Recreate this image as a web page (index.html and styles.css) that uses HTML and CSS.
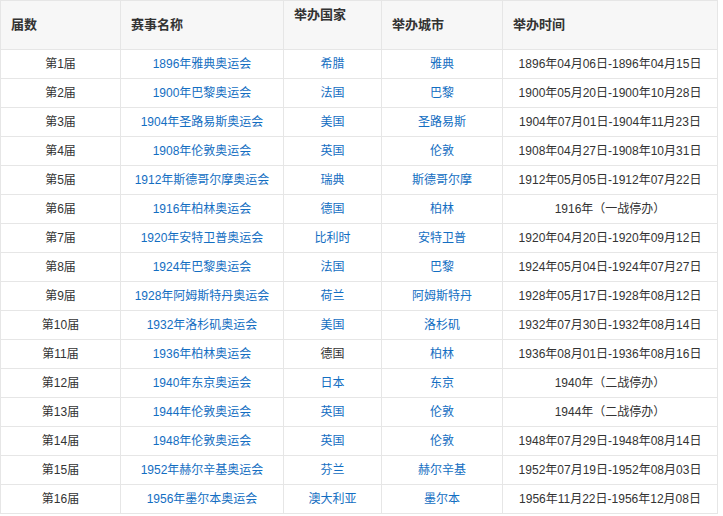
FILE: index.html
```html
<!DOCTYPE html>
<html lang="zh-CN">
<head>
<meta charset="utf-8">
<title>奥运会列表</title>
<link rel="stylesheet" href="styles.css">
</head>
<body>
<table class="olympics">
  <colgroup>
    <col class="c1"><col class="c2"><col class="c3"><col class="c4"><col class="c5">
  </colgroup>
  <thead>
    <tr class="head">
      <th>届数</th>
      <th>赛事名称</th>
      <th class="top">举办国家</th>
      <th>举办城市</th>
      <th>举办时间</th>
    </tr>
  </thead>
  <tbody>
    <tr><td>第1届</td><td><a class="link">1896年雅典奥运会</a></td><td><a class="link">希腊</a></td><td><a class="link">雅典</a></td><td>1896年04月06日-1896年04月15日</td></tr>
    <tr><td>第2届</td><td><a class="link">1900年巴黎奥运会</a></td><td><a class="link">法国</a></td><td><a class="link">巴黎</a></td><td>1900年05月20日-1900年10月28日</td></tr>
    <tr><td>第3届</td><td><a class="link">1904年圣路易斯奥运会</a></td><td><a class="link">美国</a></td><td><a class="link">圣路易斯</a></td><td>1904年07月01日-1904年11月23日</td></tr>
    <tr><td>第4届</td><td><a class="link">1908年伦敦奥运会</a></td><td><a class="link">英国</a></td><td><a class="link">伦敦</a></td><td>1908年04月27日-1908年10月31日</td></tr>
    <tr><td>第5届</td><td><a class="link">1912年斯德哥尔摩奥运会</a></td><td><a class="link">瑞典</a></td><td><a class="link">斯德哥尔摩</a></td><td>1912年05月05日-1912年07月22日</td></tr>
    <tr><td>第6届</td><td><a class="link">1916年柏林奥运会</a></td><td><a class="link">德国</a></td><td><a class="link">柏林</a></td><td>1916年（一战停办）</td></tr>
    <tr><td>第7届</td><td><a class="link">1920年安特卫普奥运会</a></td><td><a class="link">比利时</a></td><td><a class="link">安特卫普</a></td><td>1920年04月20日-1920年09月12日</td></tr>
    <tr><td>第8届</td><td><a class="link">1924年巴黎奥运会</a></td><td><a class="link">法国</a></td><td><a class="link">巴黎</a></td><td>1924年05月04日-1924年07月27日</td></tr>
    <tr><td>第9届</td><td><a class="link">1928年阿姆斯特丹奥运会</a></td><td><a class="link">荷兰</a></td><td><a class="link">阿姆斯特丹</a></td><td>1928年05月17日-1928年08月12日</td></tr>
    <tr><td>第10届</td><td><a class="link">1932年洛杉矶奥运会</a></td><td><a class="link">美国</a></td><td><a class="link">洛杉矶</a></td><td>1932年07月30日-1932年08月14日</td></tr>
    <tr><td>第11届</td><td><a class="link">1936年柏林奥运会</a></td><td>德国</td><td><a class="link">柏林</a></td><td>1936年08月01日-1936年08月16日</td></tr>
    <tr><td>第12届</td><td><a class="link">1940年东京奥运会</a></td><td><a class="link">日本</a></td><td><a class="link">东京</a></td><td>1940年（二战停办）</td></tr>
    <tr><td>第13届</td><td><a class="link">1944年伦敦奥运会</a></td><td><a class="link">英国</a></td><td><a class="link">伦敦</a></td><td>1944年（二战停办）</td></tr>
    <tr><td>第14届</td><td><a class="link">1948年伦敦奥运会</a></td><td><a class="link">英国</a></td><td><a class="link">伦敦</a></td><td>1948年07月29日-1948年08月14日</td></tr>
    <tr><td>第15届</td><td><a class="link">1952年赫尔辛基奥运会</a></td><td><a class="link">芬兰</a></td><td><a class="link">赫尔辛基</a></td><td>1952年07月19日-1952年08月03日</td></tr>
    <tr><td>第16届</td><td><a class="link">1956年墨尔本奥运会</a></td><td><a class="link">澳大利亚</a></td><td><a class="link">墨尔本</a></td><td>1956年11月22日-1956年12月08日</td></tr>
  </tbody>
</table>
</body>
</html>
```
FILE: styles.css
```css
html, body {
  margin: 0;
  padding: 0;
  background: #ffffff;
}

body {
  font-family: "Liberation Sans", Arial, "Noto Sans CJK SC", sans-serif;
  font-size: 12px;
  color: #333333;
}

.olympics {
  border-collapse: collapse;
  table-layout: fixed;
  width: 717px;
}

.c1 { width: 120px; }
.c2 { width: 163px; }
.c3 { width: 98px; }
.c4 { width: 121px; }
.c5 { width: 215px; }

.olympics th,
.olympics td {
  border: 1px solid #e6e6e6;
  padding: 0;
}

.head {
  height: 49px;
}

.head th {
  background: #f7f7f7;
  font-size: 13px;
  font-weight: bold;
  text-align: left;
  padding-left: 10px;
  color: #333333;
  vertical-align: middle;
  line-height: 18px;
}

.head th.top {
  vertical-align: top;
  padding-top: 5px;
}

.olympics tbody tr {
  height: 29px;
}

.olympics td {
  text-align: center;
  vertical-align: middle;
  line-height: 18px;
  white-space: nowrap;
}

.link {
  color: #136ec2;
  text-decoration: none;
}
```
